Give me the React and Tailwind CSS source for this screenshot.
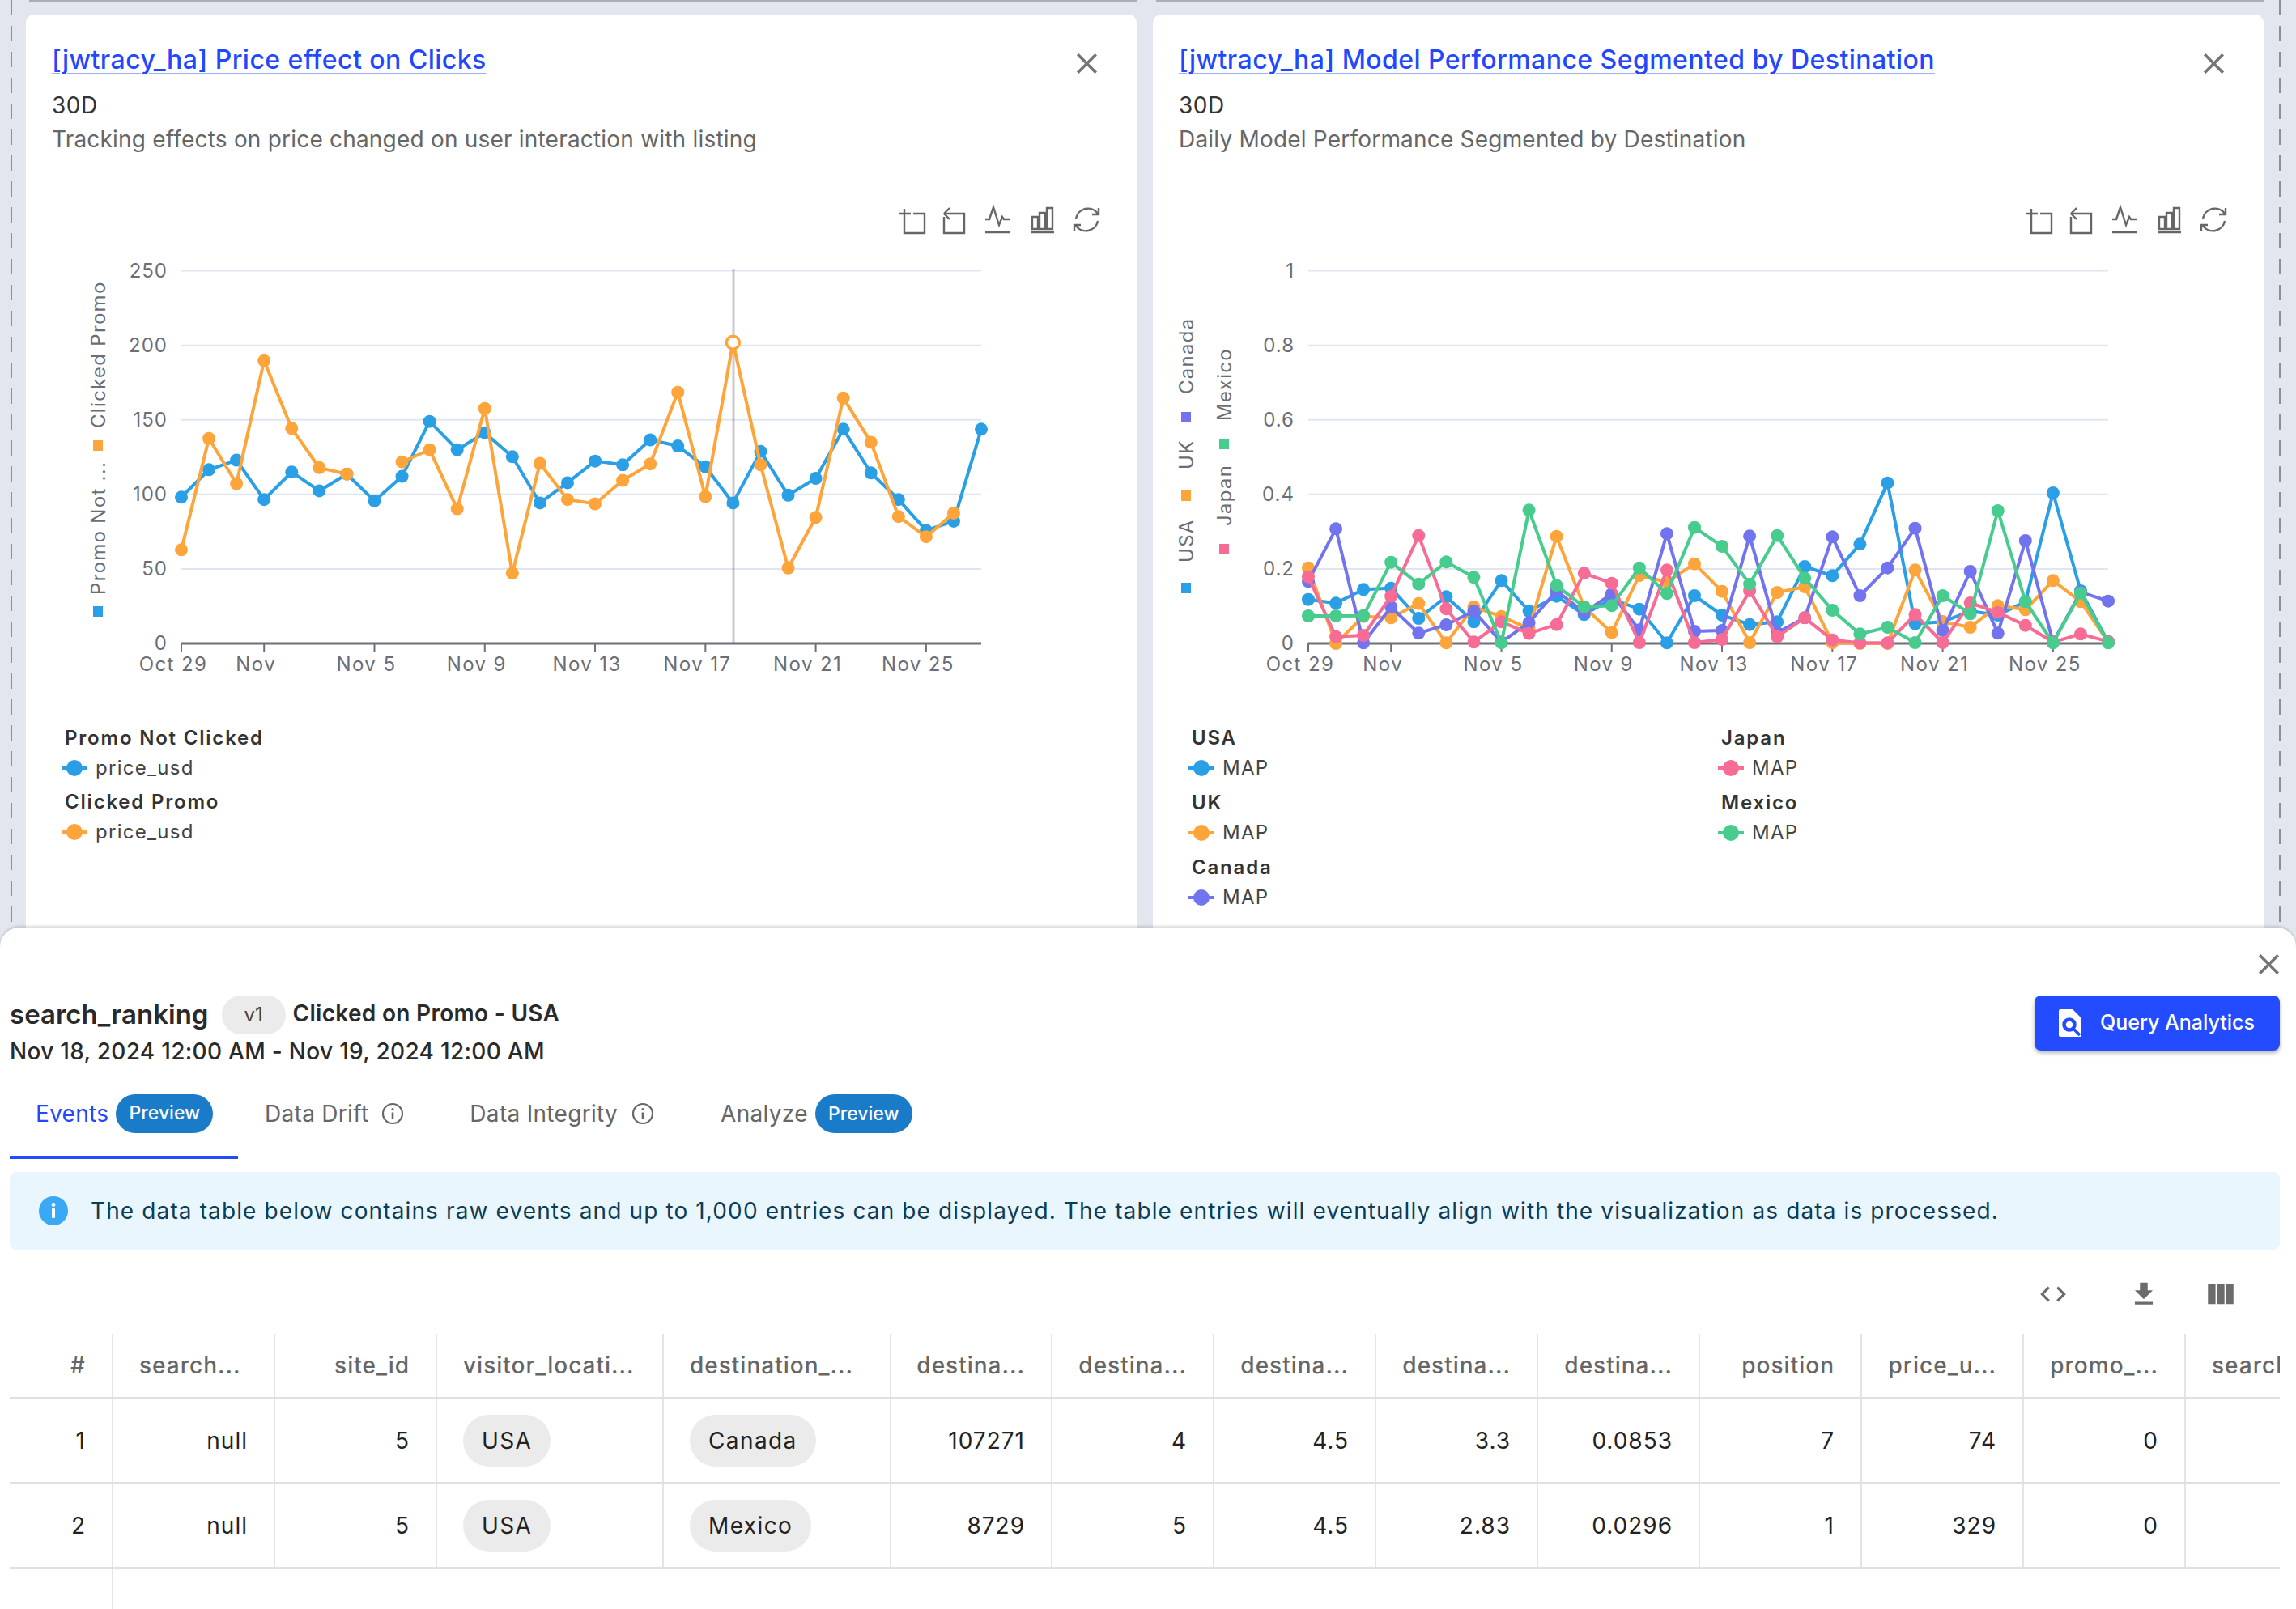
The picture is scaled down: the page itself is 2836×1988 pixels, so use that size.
import React from "react";

const BLUE = "#2a9fe6", ORANGE = "#fda53b", PURPLE = "#7173ef", PINK = "#f76c95", GREEN = "#47cc8d";
const DAY_TICKS = [[0, "Oct 29"], [3, "Nov"], [7, "Nov 5"], [11, "Nov 9"], [15, "Nov 13"], [19, "Nov 17"], [23, "Nov 21"], [27, "Nov 25"]];

const c1blue = [880,785,752,888,793,858,800,893,808,618,716,657,740,900,830,755,768,682,703,775,900,722,873,815,645,796,888,995,963,645];
const c1orange = [1062,677,833,408,642,778,800,null,758,716,920,573,1143,763,888,903,822,765,517,878,345,768,1125,950,537,690,947,1017,935,null];

const c2usa = [1322,1336,1285,1280,1392,1312,1405,1252,1365,1310,1378,1320,1358,1483,1308,1380,1415,1405,1200,1234,1117,890,1412,1405,1365,1380,1330,927,1290,1480];
const c2uk = [1205,1485,1385,1390,1337,1483,1350,1385,1430,1088,1350,1445,1233,1257,1190,1292,1482,1296,1275,1482,1485,1485,1213,1405,1425,1345,1360,1252,1330,1480];
const c2ca = [1255,1060,1483,1350,1447,1416,1365,1480,1408,1290,1370,1302,1435,1078,1440,1437,1087,1445,1390,1090,1308,1205,1058,1437,1218,1447,1104,1480,1295,1328];
const c2jp = [1238,1460,1455,1310,1085,1357,1480,1405,1448,1415,1225,1262,1482,1213,1482,1470,1290,1460,1390,1472,1483,1483,1378,1482,1335,1370,1418,1480,1450,1478];
const c2mx = [1383,1383,1382,1184,1265,1183,1240,1483,991,1270,1350,1345,1205,1300,1055,1125,1265,1085,1243,1362,1450,1425,1482,1308,1375,993,1330,1483,1298,1483];

function Series({ data, x0, step, yBase, yScale, color, hollow }) {
  const segs = [];
  let cur = [];
  data.forEach((v, i) => {
    if (v === null) {
      if (cur.length) segs.push(cur);
      cur = [];
    } else cur.push([x0 + i * step, yBase + v / yScale, i]);
  });
  if (cur.length) segs.push(cur);
  return (
    <g>
      {segs.map((s, k) => (
        <polyline key={k} points={s.map((p) => `${p[0]},${p[1]}`).join(" ")} fill="none" stroke={color} strokeWidth="4" strokeLinejoin="round" />
      ))}
      {segs.flat().map((p) =>
        hollow === p[2] ? (
          <circle key={p[2]} cx={p[0]} cy={p[1]} r="8" fill="#fff" stroke={color} strokeWidth="3.5" />
        ) : (
          <circle key={p[2]} cx={p[0]} cy={p[1]} r="8" fill={color} />
        )
      )}
    </g>
  );
}

function Toolbox({ ox }) {
  const s = { fill: "none", stroke: "#666", strokeWidth: 2.4 };
  return (
    <g transform={`translate(${ox} 0)`} {...s}>
      <path d="M1110 264h15M1117 258v30h25v-24h-14" />
      <path d="M1166 264h25v24h-25v-20M1166 264l7-7M1166 264l7 7" strokeLinejoin="miter" />
      <path d="M1217 271h5l5-15 7 22 4-10 2 3h7M1217 287h30" />
      <path d="M1274 287h28M1275 268h7v15h-7zM1284 263h7v20h-7zM1293 257h7v26h-7z" />
      <path d="M1329 270a15 15 0 0 1 27-6M1356 273a15 15 0 0 1-27 6M1357 257v8h-8M1327 286v-8h8" />
    </g>
  );
}

function VLabel({ x, y, children }) {
  return (
    <text transform={`translate(${x} ${y}) rotate(-90)`} fontSize="24" letterSpacing="1.3" fill="#6b6e76" dominantBaseline="middle">
      {children}
    </text>
  );
}

function Frame({ x0, x1, step, labels }) {
  return (
    <g fontFamily="Inter, sans-serif">
      {labels.map((l, i) => {
        const y = 795 - (i * 460.4) / (labels.length - 1);
        return (
          <g key={l}>
            {i > 0 && <line x1={x0} x2={x1} y1={y} y2={y} stroke="#e0e6f1" strokeWidth="2" />}
            <text x={x0 - 17} y={y + 1.5} textAnchor="end" dominantBaseline="middle" fontSize="24" letterSpacing="1" fill="#6b6e76">
              {l}
            </text>
          </g>
        );
      })}
      <line x1={x0} x2={x1} y1={795} y2={795} stroke="#6e7079" strokeWidth="3" />
      {DAY_TICKS.map(([i, t]) => (
        <g key={t}>
          <line x1={x0 + i * step} x2={x0 + i * step} y1={795} y2={805} stroke="#6e7079" strokeWidth="2" />
          <text x={x0 + i * step - 10} y={822} textAnchor="middle" dominantBaseline="middle" fontSize="24" letterSpacing="1.4" fill="#6b6e76">
            {t}
          </text>
        </g>
      ))}
    </g>
  );
}

function Chart1() {
  return (
    <svg width="1372" height="620" viewBox="32 240 1372 620" className="block">
      <Toolbox ox={0} />
      <Frame x0={224} x1={1212} step={34.07} labels={["0", "50", "100", "150", "200", "250"]} />
      <line x1="906" x2="906" y1="332" y2="795" stroke="#60647a" strokeOpacity="0.35" strokeWidth="3" />
      <g fontFamily="Inter, sans-serif">
        <rect x="115" y="749" width="12" height="13" fill={BLUE} />
        <VLabel x={123} y={735}>Promo Not ...</VLabel>
        <rect x="115" y="544" width="12" height="13" fill={ORANGE} />
        <VLabel x={123} y={529}>Clicked Promo</VLabel>
      </g>
      <Series data={c1blue} x0={224} step={34.07} yBase={300} yScale={2.8} color={BLUE} />
      <Series data={c1orange} x0={224} step={34.07} yBase={300} yScale={2.8} color={ORANGE} hollow={20} />
    </svg>
  );
}

function Chart2() {
  return (
    <svg width="1372" height="620" viewBox="1424 240 1372 620" className="block">
      <Toolbox ox={1392} />
      <Frame x0={1616} x1={2604} step={34.07} labels={["0", "0.2", "0.4", "0.6", "0.8", "1"]} />
      <g fontFamily="Inter, sans-serif">
        <rect x="1459" y="720" width="12" height="13" fill={BLUE} />
        <VLabel x={1467} y={695}>USA</VLabel>
        <rect x="1459" y="606" width="12" height="13" fill={ORANGE} />
        <VLabel x={1467} y={580}>UK</VLabel>
        <rect x="1459" y="509" width="12" height="13" fill={PURPLE} />
        <VLabel x={1467} y={487}>Canada</VLabel>
        <rect x="1506" y="672" width="12" height="13" fill={PINK} />
        <VLabel x={1514} y={650}>Japan</VLabel>
        <rect x="1506" y="542" width="12" height="13" fill={GREEN} />
        <VLabel x={1514} y={520}>Mexico</VLabel>
      </g>
      <Series data={c2usa} x0={1616} step={34.07} yBase={300} yScale={3} color={BLUE} />
      <Series data={c2uk} x0={1616} step={34.07} yBase={300} yScale={3} color={ORANGE} />
      <Series data={c2ca} x0={1616} step={34.07} yBase={300} yScale={3} color={PURPLE} />
      <Series data={c2jp} x0={1616} step={34.07} yBase={300} yScale={3} color={PINK} />
      <Series data={c2mx} x0={1616} step={34.07} yBase={300} yScale={3} color={GREEN} />
    </svg>
  );
}

function CloseIcon({ size = 43, color = "#757575" }) {
  return (
    <svg width={size} height={size} viewBox="0 0 24 24" fill={color}>
      <path d="M19 6.41 17.59 5 12 10.59 6.41 5 5 6.41 10.59 12 5 17.59 6.41 19 12 13.41 17.59 19 19 17.59 13.41 12z" />
    </svg>
  );
}

function InfoOutline() {
  return (
    <svg width="28" height="28" viewBox="0 0 28 28" fill="none" stroke="#666" strokeWidth="2.2">
      <circle cx="14" cy="14" r="12" />
      <path d="M14 12.5v8" strokeWidth="2.6" />
      <circle cx="14" cy="8.5" r="1.6" fill="#666" stroke="none" />
    </svg>
  );
}

function LegendGroup({ title, label, color }) {
  return (
    <div className="mb-[4px]">
      <div className="h-[38px] leading-[38px] text-[24px] font-semibold tracking-[1.8px] text-[#333]">{title}</div>
      <div className="flex h-[38px] items-center ml-[-4px] mt-[-1px] mb-[1px]">
        <svg width="32" height="22" viewBox="0 0 32 22" className="mr-[10px]">
          <line x1="0" x2="32" y1="11" y2="11" stroke={color} strokeWidth="4" />
          <circle cx="16" cy="11" r="10" fill={color} />
        </svg>
        <span className="text-[24px] tracking-[1.3px] text-[#444]">{label}</span>
      </div>
    </div>
  );
}

function Card({ title, desc, children }) {
  return (
    <div className="flex-1 flex flex-col">
      <div className="h-[2px] ml-[4px] bg-[#a9adb5]" />
      <div className="relative mt-[16px] flex-1 rounded-t-[10px] bg-white">
        <div className="absolute right-[40px] top-[39px]">
          <CloseIcon />
        </div>
        <div className="px-[32px] pt-[36px]">
          <div className="h-[40px] leading-[40px] text-[32px] font-medium tracking-[0.45px] text-[#2148ff] underline decoration-[#9fb0ff] decoration-2 underline-offset-[5px]">{title}</div>
          <div className="mt-[16px] h-[40px] leading-[40px] text-[28px] text-[#333] tracking-[0.5px]">30D</div>
          <div className="mt-[2px] h-[40px] leading-[40px] text-[28px] text-[#666] tracking-[0.2px]">{desc}</div>
        </div>
        {children}
      </div>
    </div>
  );
}

function Dashes() {
  return <div className="w-[2px] h-full shrink-0 bg-[repeating-linear-gradient(to_bottom,#8d9098_0,#8d9098_19px,transparent_19px,transparent_32px)]" />;
}

function PreviewPill() {
  return <span className="ml-[9px] flex h-[48px] w-[120px] items-center justify-center rounded-full bg-[#1a7bc8] text-[23px] font-medium tracking-normal text-white">Preview</span>;
}

const COLS = [128, 200, 200, 280, 281, 199, 200, 200, 200, 200, 200, 200, 200, 200];
const HEAD = ["#", "search...", "site_id", "visitor_locati...", "destination_...", "destina...", "destina...", "destina...", "destina...", "destina...", "position", "price_u...", "promo_...", "search"];
const LEFT = [false, true, false, true, true, false, false, false, false, false, false, false, false, true];
const ROWS = [
  ["1", "null", "5", "USA", "Canada", "107271", "4", "4.5", "3.3", "0.0853", "7", "74", "0", ""],
  ["2", "null", "5", "USA", "Mexico", "8729", "5", "4.5", "2.83", "0.0296", "1", "329", "0", ""],
];

function Chip({ children }) {
  return <span className="flex h-[64px] items-center rounded-full bg-[#ebebeb] px-[23px] text-[28px] tracking-[1.4px] text-[#222]">{children}</span>;
}

function TableRow({ cells, header }) {
  return (
    <div className={`flex border-b-[3px] border-[#e0e0e0] w-max ${header ? "h-[81px]" : "h-[105px]"}`}>
      {cells.map((c, i) => {
        const chip = !header && (i === 3 || i === 4);
        return (
          <div
            key={i}
            style={{ width: COLS[i] }}
            className={`flex shrink-0 items-center border-r-2 border-[#e4e4e4] px-[32px] whitespace-nowrap overflow-hidden text-[28px] ${LEFT[i] && (header || chip) ? "justify-start" : "justify-end"} ${header ? "font-medium text-[#666] tracking-[1px]" : "text-[#222] tracking-[1px]"} ${i === 13 ? "border-r-0" : ""}`}
          >
            {chip ? <Chip>{c}</Chip> : c}
          </div>
        );
      })}
    </div>
  );
}

export default function App() {
  return (
    <div className="flex h-[1988px] w-[2836px] flex-col overflow-hidden bg-[#e3e6ee] font-[Inter,sans-serif]">
      <div className="flex h-[1146px] shrink-0 overflow-hidden">
        <div className="ml-[13px] mr-[17px] h-full shrink-0">
          <Dashes />
        </div>
        <div className="flex flex-1 gap-[20px]">
          <Card title="[jwtracy_ha] Price effect on Clicks" desc="Tracking effects on price changed on user interaction with listing">
            <div className="mt-[48px]">
              <Chart1 />
            </div>
            <div className="mt-[33px] pl-[48px]">
              <LegendGroup title="Promo Not Clicked" label="price_usd" color={BLUE} />
              <LegendGroup title="Clicked Promo" label="price_usd" color={ORANGE} />
            </div>
          </Card>
          <Card title="[jwtracy_ha] Model Performance Segmented by Destination" desc="Daily Model Performance Segmented by Destination">
            <div className="mt-[48px]">
              <Chart2 />
            </div>
            <div className="mt-[33px] grid grid-flow-col grid-rows-3 grid-cols-[654px_1fr] pl-[48px]">
              <LegendGroup title="USA" label="MAP" color={BLUE} />
              <LegendGroup title="UK" label="MAP" color={ORANGE} />
              <LegendGroup title="Canada" label="MAP" color={PURPLE} />
              <LegendGroup title="Japan" label="MAP" color={PINK} />
              <LegendGroup title="Mexico" label="MAP" color={GREEN} />
            </div>
          </Card>
        </div>
        <div className="ml-[19px] mr-[19px] h-full shrink-0">
          <Dashes />
        </div>
      </div>

      <div className="relative flex flex-1 flex-col rounded-t-[24px] bg-white pl-[12px] pr-[20px] pt-[84px] shadow-[0_-2px_3px_rgba(0,0,0,0.14)]">
        <div className="absolute right-[12px] top-[24px]">
          <CloseIcon />
        </div>
        <div className="flex items-start justify-between">
          <div>
            <div className="flex h-[48px] items-center">
              <span className="text-[33px] font-semibold text-[#2a2a2a]">search_ranking</span>
              <span className="ml-[16px] flex h-[48px] w-[79px] items-center justify-center rounded-full bg-[#ebebeb] text-[24px] text-[#444]">v1</span>
              <span className="ml-[9px] mb-[4px] text-[28px] font-semibold tracking-[0.3px] text-[#2a2a2a]">Clicked on Promo - USA</span>
            </div>
            <div className="mt-[1px] h-[41px] leading-[41px] text-[28px] font-medium tracking-[0.3px] text-[#2a2a2a]">Nov 18, 2024 12:00 AM - Nov 19, 2024 12:00 AM</div>
          </div>
          <button className="flex h-[68px] w-[303px] items-center rounded-[8px] bg-[#234bff] pl-[30px] text-[25px] font-medium text-white shadow-[0_3px_5px_rgba(0,0,0,0.3)]">
            <svg width="28" height="34" viewBox="0 0 28 34" className="mr-[23px] shrink-0">
              <path d="M2 0H17L27 10V34H3Q0 34 0 32V2Q0 0 2 0z" fill="#fff" />
              <circle cx="13" cy="19" r="6.5" fill="#fff" stroke="#234bff" strokeWidth="4.5" />
              <line x1="18" y1="24" x2="26" y2="32" stroke="#234bff" strokeWidth="3.5" />
            </svg>
            Query Analytics
          </button>
        </div>

        <div className="flex h-[112px] items-stretch text-[28px] tracking-[0.3px] text-[#666]">
          <div className="flex w-[282px] items-center border-b-4 border-[#234bff] pl-[32px] pt-[3px]">
            <span className="text-[#2148ff]">Events</span>
            <PreviewPill />
          </div>
          <div className="ml-[33px] flex items-center gap-[16px]">
            <span>Data Drift</span>
            <InfoOutline />
          </div>
          <div className="ml-[81px] flex items-center gap-[17px]">
            <span>Data Integrity</span>
            <InfoOutline />
          </div>
          <div className="ml-[82px] flex items-center">
            <span>Analyze</span>
            <PreviewPill />
          </div>
        </div>

        <div className="mt-[16px] flex h-[96px] shrink-0 items-center rounded-[8px] bg-[#e9f6fd] pl-[36px]">
          <svg width="36" height="36" viewBox="0 0 36 36" className="mr-[28px] shrink-0">
            <circle cx="18" cy="18" r="18" fill="#39a8f5" />
            <rect x="16" y="15" width="4" height="12" rx="1" fill="#fff" />
            <circle cx="18" cy="10.5" r="2.4" fill="#fff" />
          </svg>
          <span className="text-[28px] tracking-[1.12px] text-[#0d3c55]">The data table below contains raw events and up to 1,000 entries can be displayed. The table entries will eventually align with the visualization as data is processed.</span>
        </div>

        <div className="flex h-[104px] shrink-0 items-center justify-end pt-[6px] pr-[52px] text-[#6b6b6b]">
          <svg width="38" height="38" viewBox="0 0 24 24" fill="currentColor" className="mr-[74px]">
            <path d="M9.4 16.6 4.8 12l4.6-4.6L8 6l-6 6 6 6 1.4-1.4zm5.2 0 4.6-4.6-4.6-4.6L16 6l6 6-6 6-1.4-1.4z" />
          </svg>
          <svg width="38" height="38" viewBox="0 0 24 24" fill="currentColor" className="mr-[55px]">
            <path d="M5 20h14v-2H5v2zM19 9h-4V3H9v6H5l7 7 7-7z" />
          </svg>
          <svg width="42" height="42" viewBox="0 0 24 24" fill="currentColor">
            <path d="M14.67 5v14H9.33V5h5.34zm1 14H21V5h-5.33v14zm-7.34 0V5H3v14h5.33z" />
          </svg>
        </div>

        <div className="flex-1 overflow-hidden">
          <TableRow cells={HEAD} header />
          {ROWS.map((r) => (
            <TableRow key={r[0]} cells={r} />
          ))}
          <div className="h-[60px] w-[128px] border-r-2 border-[#e4e4e4]" />
        </div>
      </div>
    </div>
  );
}
